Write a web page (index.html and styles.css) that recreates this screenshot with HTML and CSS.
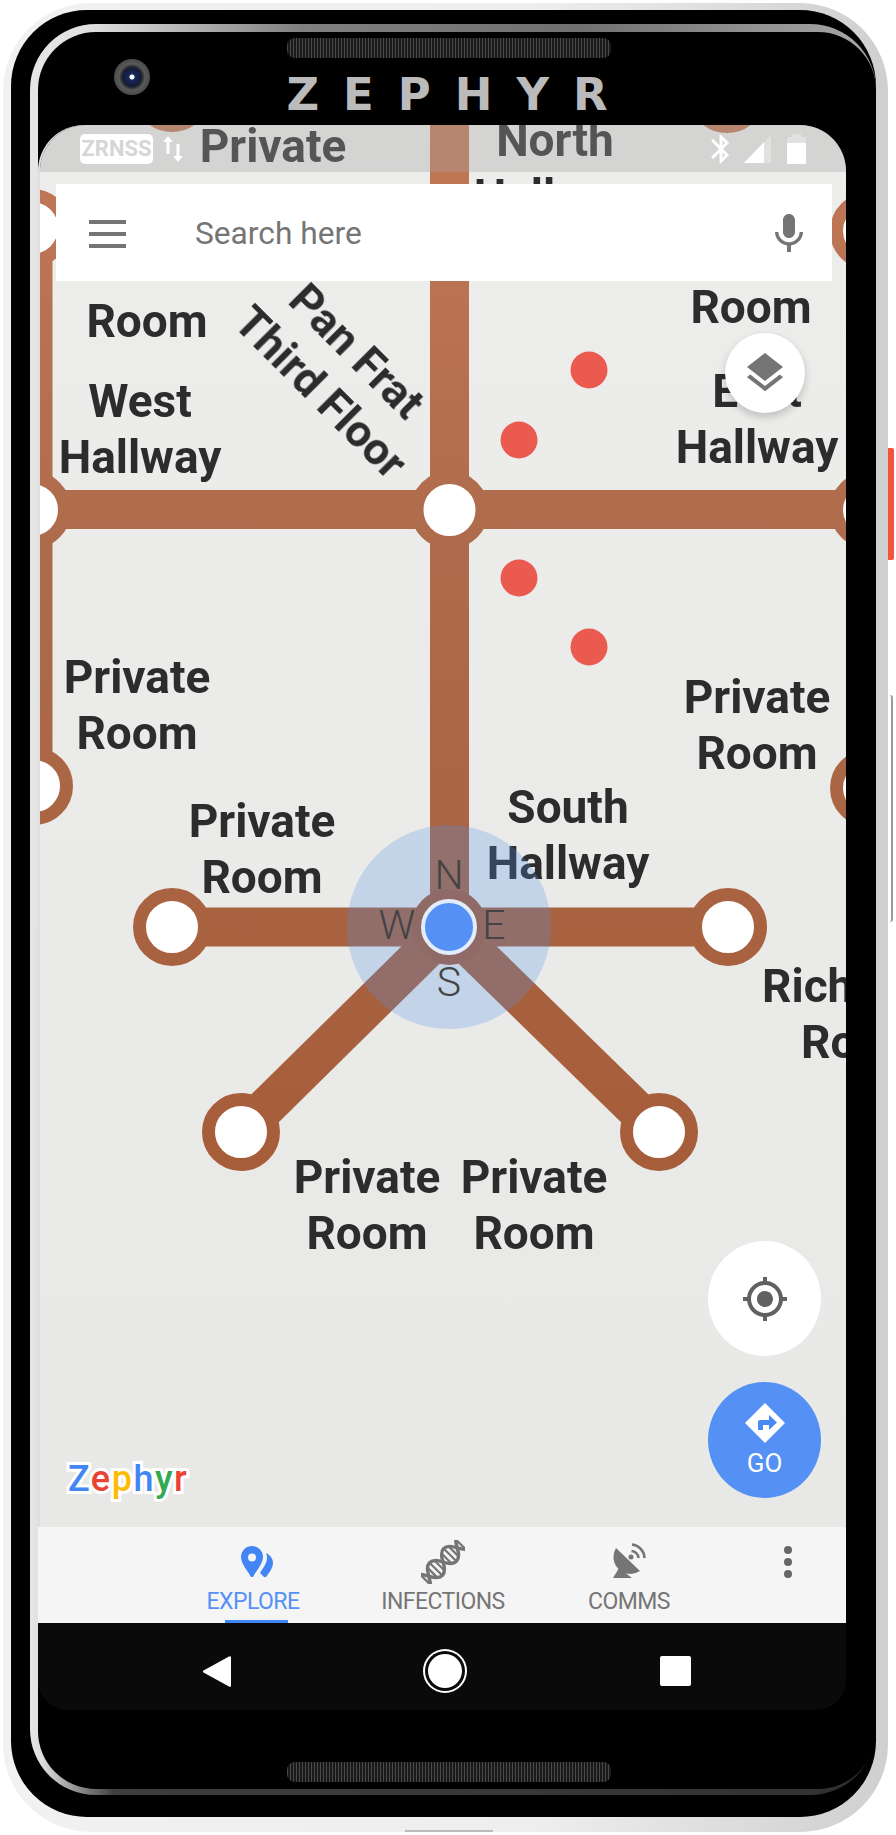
FILE: index.html
```html
<!DOCTYPE html>
<html lang="en">
<head>
<meta charset="utf-8">
<title>Zephyr</title>
<link rel="stylesheet" href="styles.css">
</head>
<body>
<div class="phone">
  <span class="side-btn side-red"></span>
  <span class="side-btn side-vol"></span>
  <div class="body">
    <div class="bezel">
      <div class="bezel-in">
        <header class="head">
          <span class="camera"></span>
          <div class="speaker"></div>
          <div class="brand">ZEPHYR</div>
        </header>
        <div class="screen">
          <main class="map">
            <svg class="tracks" viewBox="40 125 806 1402" width="806" height="1402" aria-hidden="true">
              <defs>
                <linearGradient id="t" gradientUnits="userSpaceOnUse" x1="0" y1="180" x2="0" y2="1150">
                  <stop offset="0" stop-color="#bf7655"/>
                  <stop offset="0.4" stop-color="#ad6b4b"/>
                  <stop offset="1" stop-color="#a65d3a"/>
                </linearGradient>
              </defs>
              <g stroke="url(#t)" stroke-width="39" fill="none">
                <path d="M449.500 100V927"/>
                <path d="M33 509.500H869"/>
                <path d="M33 228V786"/>
                <path d="M172 927H728"/>
                <path d="M449 927L241 1132"/>
                <path d="M449 927L659 1132"/>
              </g>
              <circle cx="449" cy="927" r="38" fill="#a65d3a"/>
              <g fill="#fff" stroke="url(#t)" stroke-width="13">
                <circle cx="172" cy="93" r="32.500"/>
                <circle cx="727" cy="94" r="32.500"/>
                <circle cx="32" cy="228" r="32.500"/>
                <circle cx="869" cy="231" r="32.500"/>
                <circle cx="32" cy="510" r="32.500"/>
                <circle cx="449.500" cy="510" r="32.500"/>
                <circle cx="869" cy="510" r="32.500"/>
                <circle cx="34" cy="786" r="32.500"/>
                <circle cx="869" cy="788" r="32.500"/>
                <circle cx="172" cy="927" r="32.500"/>
                <circle cx="728" cy="927" r="32.500"/>
                <circle cx="241" cy="1132" r="32.500"/>
                <circle cx="659" cy="1132" r="32.500"/>
              </g>
              <g fill="#ea5a4f">
                <circle cx="589" cy="370" r="18.500"/>
                <circle cx="519" cy="440" r="18.500"/>
                <circle cx="519" cy="578" r="18.500"/>
                <circle cx="589" cy="647" r="18.500"/>
              </g>
            </svg>

            <div class="lbl l-a">Private<br>Room</div>
            <div class="lbl l-b">North<br>Hallway</div>
            <div class="lbl l-c">Private<br>Room</div>
            <div class="lbl l-d">West<br>Hallway</div>
            <div class="lbl l-e">Room</div>
            <div class="lbl l-f">East<br>Hallway</div>
            <div class="lbl l-g">Private<br>Room</div>
            <div class="lbl l-h">Private<br>Room</div>
            <div class="lbl l-i">Private<br>Room</div>
            <div class="lbl l-j">South<br>Hallway</div>
            <div class="lbl-edge l-k">Richards</div>
            <div class="lbl-edge l-k2">Room</div>
            <div class="lbl l-l">Private<br>Room</div>
            <div class="lbl l-m">Private<br>Room</div>
            <div class="lbl-rot l-pan">Pan Frat</div>
            <div class="lbl-rot l-third">Third Floor</div>

            <div class="halo"></div>
            <span class="cp cp-n">N</span>
            <span class="cp cp-w">W</span>
            <span class="cp cp-e">E</span>
            <span class="cp cp-s">S</span>
            <div class="me"></div>

            <div class="status">
              <span class="badge">ZRNSS</span>
              <svg class="st-arrows" viewBox="0 0 20 26" width="20" height="26" aria-hidden="true">
                <path d="M5 0L0 6h3.500v12h3V6H10zM15 26l5-6h-3.500V8h-3v12H10z" fill="#fff"/>
              </svg>
              <svg class="st-bt" viewBox="0 0 24 24" width="34" height="34" aria-hidden="true">
                <path d="M17.710 7.710L12 2h-1v7.590L6.410 5 5 6.410 10.590 12 5 17.590 6.410 19 11 14.410V22h1l5.710-5.710-4.300-4.290 4.300-4.290zM13 5.830l1.880 1.880L13 9.590V5.830zm1.880 10.460L13 18.170v-3.760l1.880 1.880z" fill="#fff"/>
              </svg>
              <svg class="st-sig" viewBox="0 0 27 28" width="27" height="28" aria-hidden="true">
                <path d="M27 0V28H0z" fill="#fff" fill-opacity=".3"/>
                <path d="M20 7V28H0z" fill="#fff"/>
              </svg>
              <svg class="st-bat" viewBox="0 0 19 30" width="19" height="30" aria-hidden="true">
                <path d="M5 0h9v3h5v27H0V3h5z" fill="#fff" fill-opacity=".3"/>
                <path d="M0 9h19v21H0z" fill="#fff"/>
              </svg>
            </div>

            <div class="search">
              <div class="burger"><i></i><i></i><i></i></div>
              <span class="search-text">Search here</span>
              <svg class="mic" viewBox="0 0 24 24" width="48" height="48" aria-hidden="true">
                <path d="M12 14c1.660 0 2.990-1.340 2.990-3L15 5c0-1.660-1.340-3-3-3S9 3.340 9 5v6c0 1.660 1.340 3 3 3zm5.300-3c0 3-2.540 5.100-5.300 5.100S6.700 14 6.700 11H5c0 3.410 2.720 6.230 6 6.720V21h2v-3.280c3.280-.48 6-3.300 6-6.720h-1.700z" fill="#757575"/>
              </svg>
            </div>

            <div class="fab fab-layers">
              <svg viewBox="0 0 24 24" width="48" height="48" aria-hidden="true">
                <path d="M11.990 18.540l-7.370-5.730L3 14.070l9 7 9-7-1.630-1.270-7.380 5.740zM12 16l7.360-5.730L21 9l-9-7-9 7 1.630 1.270L12 16z" fill="#757575"/>
              </svg>
            </div>
            <div class="fab fab-loc">
              <svg viewBox="0 0 24 24" width="48" height="48" aria-hidden="true">
                <path d="M12 8c-2.210 0-4 1.790-4 4s1.790 4 4 4 4-1.790 4-4-1.790-4-4-4zm8.940 3c-.46-4.170-3.770-7.480-7.940-7.940V1h-2v2.060C6.830 3.520 3.520 6.830 3.060 11H1v2h2.060c.46 4.170 3.770 7.480 7.940 7.940V23h2v-2.060c4.170-.46 7.480-3.770 7.940-7.940H23v-2h-2.060zM12 19c-3.870 0-7-3.130-7-7s3.130-7 7-7 7 3.130 7 7-3.130 7-7 7z" fill="#616161"/>
              </svg>
            </div>
            <div class="fab fab-go">
              <svg viewBox="0 0 40 40" width="40" height="40" aria-hidden="true">
                <path d="M20 0L40 20 20 40 0 20z" fill="#fff"/>
                <path d="M13 27v-8a2 2 0 0 1 2-2h9v-5l8 7.500-8 7.500v-5h-6v5z" fill="#4a8af4"/>
              </svg>
              <span class="go-text">GO</span>
            </div>

            <div class="logo"><span class="c-b">Z</span><span class="c-r">e</span><span class="c-y">p</span><span class="c-b">h</span><span class="c-g">y</span><span class="c-r">r</span></div>
          </main>

          <nav class="tabs">
            <div class="tab tab-explore">
              <div class="ic">
                <svg class="ic-pin" viewBox="0 0 32 32" width="32" height="32" aria-hidden="true">
                  <path fill-rule="evenodd" d="M11 0a11 11 0 0 1 11 11c0 7-7 14-10 20h-2C7 25 0 18 0 11A11 11 0 0 1 11 0zm0 7.500a4 4 0 1 0 0 8 4 4 0 0 0 0-8z" fill="#4285f4"/>
                  <path d="M25 7c4 2 7 5.500 7 10 0 5-4 10-7 14h-2l-4-4c3-5 7-10 7-15 0-2-.4-3.500-1-5z" fill="#4285f4"/>
                </svg>
              </div>
              <span class="tab-label">EXPLORE</span>
              <span class="tab-line"></span>
            </div>
            <div class="tab">
              <div class="ic">
                <svg viewBox="0 0 44 44" width="44" height="44" aria-hidden="true">
                  <g transform="rotate(-45 22 22) translate(22 22)" fill="none" stroke="#757575" stroke-linecap="round">
                    <path d="M-29 10C-26 10-24 6-20 0C-14-12-6-12 0 0S14 12 20 0C24-6 26-10 29-10" stroke-width="3.400"/>
                    <path d="M-29-10C-26-10-24-6-20 0C-14 12-6 12 0 0S14-12 20 0C24 6 26 10 29 10" stroke-width="3.400"/>
                    <path d="M-25-5v10M-15-6v12M-10-8v16M-5-6v12M5-6v12M10-8v16M15-6v12M25-5v10" stroke-width="2.200"/>
                  </g>
                </svg>
              </div>
              <span class="tab-label">INFECTIONS</span>
            </div>
            <div class="tab tab-comms">
              <div class="ic">
                <svg class="ic-dish" viewBox="0 0 33 35" width="33" height="35" aria-hidden="true">
                  <path d="M3 5L27 28A17 17 0 0 1 3 5z" fill="#757575"/>
                  <path d="M0 35L6 25l13 10z" fill="#757575"/>
                  <path d="M19 1.500A14 14 0 0 1 31.500 15M18.500 8A7.500 7.500 0 0 1 25.500 15" fill="none" stroke="#757575" stroke-width="2.600"/>
                  <circle cx="18" cy="14" r="2.500" fill="#757575"/>
                </svg>
              </div>
              <span class="tab-label">COMMS</span>
            </div>
            <div class="dots"><i></i><i></i><i></i></div>
          </nav>

          <div class="softkeys">
            <svg viewBox="0 0 28 33" width="28" height="33" aria-hidden="true"><path d="M26 1.500a1.200 1.200 0 0 1 2 .8V30.700a1.200 1.200 0 0 1-2 .8L.5 17.500a1.200 1.200 0 0 1 0-2z" fill="#fff"/></svg>
            <span class="key-home"></span>
            <span class="key-recent"></span>
          </div>
        </div>
        <div class="chin"><div class="speaker"></div></div>
      </div>
    </div>
  </div>
</div>
</body>
</html>
```

FILE: styles.css
```css
* { box-sizing: border-box; }
html, body { margin: 0; padding: 0; background: #fff; }
body { width: 896px; height: 1835px; overflow: hidden; font-family: Roboto, "Liberation Sans", sans-serif; }

.phone {
  position: relative;
  margin: 3px 0 0 3px;
  width: 885px;
  height: 1829px;
  padding: 7px 12px 15px 8px;
  border-radius: 88px;
  background: linear-gradient(90deg, #f1f1f1 0, #eeeeee 60%, #cfcfcf 100%);
}
.phone::after {
  content: "";
  position: absolute;
  left: 402px;
  bottom: 0;
  width: 88px;
  height: 2px;
  background: #bbb;
}
.side-btn { position: absolute; left: 885px; }
.side-red { top: 445px; width: 6px; height: 112px; background: #f2553c; border-radius: 0 2px 2px 0; }
.side-vol { top: 692px; width: 5px; height: 227px; background: #fff; border-right: 2px solid #9b9b9b; border-radius: 0 3px 3px 0; }

.body {
  height: 100%;
  background: #000;
  border-radius: 76px;
  padding: 14px 0 22px 19px;
}
.bezel {
  height: 100%;
  border-radius: 66px;
  padding: 8px 0 6px 8px;
  background:
    linear-gradient(90deg, #e6e6e6 0, #dfdfdf 60px, #808080 32%, #707070 65%, #a8a8a8 100%) top / 100% 51% no-repeat,
    linear-gradient(90deg, #e6e6e6 0, #dedede 12px, #3e3e3e 10%, #333 92%, #2a2a2a 100%) bottom / 100% 51% no-repeat;
}
.bezel-in {
  height: 100%;
  background: #000;
  border-radius: 58px;
  padding-right: 30px;
  display: flex;
  flex-direction: column;
}

.head {
  position: relative;
  height: 93px;
  flex: none;
  padding: 6px 0 0 14px;
  display: flex;
  flex-direction: column;
  align-items: center;
}
.camera {
  position: absolute;
  left: 76px;
  top: 27px;
  width: 36px;
  height: 36px;
  border-radius: 50%;
  background: radial-gradient(circle at 50% 50%, #fff 0 2px, #1b2a5c 3px, #131a38 9px, #333 11px, #5a5a5a 13px, #4a4a4a 18px);
}
.speaker {
  width: 324px;
  height: 20px;
  flex: none;
  border-radius: 8px;
  background: repeating-linear-gradient(90deg, #484848 0 1.500px, #1a1a1a 1.500px 3px);
}
.brand {
  margin-top: 17px;
  padding-left: 24px;
  margin-right: 4px;
  font-family: "DejaVu Sans", sans-serif;
  font-size: 45px;
  line-height: 39px;
  font-weight: 700;
  letter-spacing: 24px;
  color: #bbbbbb;
  white-space: nowrap;
}

.screen { flex: none; display: flex; flex-direction: column; }
.map {
  position: relative;
  margin-left: 2px;
  height: 1402px;
  overflow: hidden;
  border-radius: 46px 46px 0 0;
  box-shadow: -2px 0 0 #dfdfdf;
  background: linear-gradient(#ededec, #e8e8e7);
}
.tracks { position: absolute; left: 0; top: 0; filter: blur(.6px); }

.lbl, .lbl-edge {
  position: absolute;
  white-space: nowrap;
  font-size: 46px;
  line-height: 56px;
  font-weight: 700;
  color: #2c2c2c;
  filter: blur(.7px);
}
.lbl { transform: translateX(-50%); text-align: center; }
.l-a { left: 233px; top: -7px; }
.l-b { left: 515px; top: -13px; }
.l-c { left: 107px; top: 112px; }
.l-d { left: 100px; top: 248px; }
.l-e { left: 711px; top: 154px; }
.l-f { left: 717px; top: 238px; }
.l-g { left: 97px; top: 524px; }
.l-h { left: 717px; top: 544px; }
.l-i { left: 222px; top: 668px; }
.l-j { left: 528px; top: 654px; }
.l-k { left: 722px; top: 833px; }
.l-k2 { left: 761px; top: 889px; }
.l-l { left: 327px; top: 1024px; }
.l-m { left: 494px; top: 1024px; }

.lbl-rot {
  position: absolute;
  white-space: nowrap;
  font-size: 45px;
  line-height: 1;
  font-weight: 700;
  color: #2c2c2c;
  transform: translate(-50%, -50%) rotate(45deg);
  filter: blur(.7px);
}
.l-pan { left: 317px; top: 226px; }
.l-third { left: 281px; top: 267px; }

.halo {
  position: absolute;
  left: 307px;
  top: 700px;
  width: 204px;
  height: 204px;
  border-radius: 50%;
  background: rgba(80, 148, 236, .25);
}
.me {
  position: absolute;
  left: 381px;
  top: 774px;
  width: 56px;
  height: 56px;
  border-radius: 50%;
  background: #5591f5;
  border: 4px solid #e2ecfb;
}
.cp {
  position: absolute;
  transform: translate(-50%, -50%);
  font-size: 41px;
  line-height: 1;
  font-weight: 300;
  color: #444;
}
.cp-n { left: 409px; top: 750px; }
.cp-w { left: 357px; top: 800px; }
.cp-e { left: 454px; top: 800px; }
.cp-s { left: 409px; top: 857px; }

.status {
  position: absolute;
  left: 0;
  top: 0;
  width: 100%;
  height: 47px;
  padding: 0 40px;
  display: flex;
  align-items: center;
  background: rgba(166, 166, 166, .345);
}
.badge {
  width: 73px;
  height: 30px;
  border-radius: 5px;
  background: #fff;
  color: #d6d6d6;
  font-size: 22px;
  line-height: 30px;
  font-weight: 700;
  text-align: center;
}
.st-arrows { margin-left: 10px; }
.st-bt { margin-left: auto; }
.st-sig { margin-left: 6px; }
.st-bat { margin-left: 16px; }

.search {
  position: absolute;
  left: 16px;
  top: 59px;
  width: 776px;
  height: 97px;
  padding: 2px 19px 0 33px;
  display: flex;
  align-items: center;
  background: #fff;
}
.burger { width: 37px; display: flex; flex-direction: column; gap: 8px; }
.burger i { display: block; height: 4px; background: #757575; }
.search-text { margin-left: 69px; font-size: 31.700px; color: #757575; }
.mic { margin-left: auto; }

.fab {
  position: absolute;
  border-radius: 50%;
  background: #fff;
  display: flex;
  flex-direction: column;
  align-items: center;
  justify-content: center;
}
.fab-layers { left: 685px; top: 208px; width: 80px; height: 80px; box-shadow: 0 4px 8px rgba(0, 0, 0, .2); }
.fab-loc { left: 668px; top: 1116px; width: 113px; height: 115px; }
.fab-go { left: 668px; top: 1257px; width: 113px; height: 116px; background: #5591f5; padding-top: 21px; justify-content: flex-start; }
.go-text { margin-top: 7px; font-size: 26px; line-height: 26px; color: #fff; }

.logo {
  position: absolute;
  left: 28px;
  top: 1333px;
  font-size: 36px;
  line-height: 42px;
  font-weight: 500;
  letter-spacing: 1.500px;
  -webkit-text-stroke: 6px #fff;
  paint-order: stroke fill;
}
.c-b { color: #4285f4; }
.c-r { color: #ea4335; }
.c-y { color: #fbbc05; }
.c-g { color: #34a853; }

.tabs {
  height: 96px;
  flex: none;
  padding-left: 120px;
  display: flex;
  background: #f5f5f5;
}
.tab {
  position: relative;
  width: 190px;
  padding-top: 13px;
  display: flex;
  flex-direction: column;
  align-items: center;
  color: #757575;
}
.tab-comms { width: 182px; }
.tab-explore { color: #5591f5; }
.ic { height: 48px; display: flex; align-items: flex-start; }
.ic-pin { margin: 6px 0 0 8px; }
.ic-dish { margin-top: 3px; }
.tab-label { font-size: 23px; letter-spacing: -.55px; line-height: 28px; }
.tab-line { position: absolute; left: 67px; bottom: 0; width: 63px; height: 3px; background: #4285f4; }
.dots { margin: 19px 0 0 auto; padding-right: 54px; display: flex; flex-direction: column; gap: 4px; }
.dots i { display: block; width: 8px; height: 8px; border-radius: 50%; background: #666; }

.softkeys {
  height: 87px;
  flex: none;
  padding: 9px 0 0 165px;
  display: flex;
  align-items: center;
  background: #0a0a0a;
  border-radius: 0 0 30px 30px;
}
.key-home {
  margin-left: 197px;
  width: 34px;
  height: 34px;
  border-radius: 50%;
  background: #fff;
  box-shadow: 0 0 0 3px #0a0a0a, 0 0 0 5px #fff;
}
.key-recent { margin-left: 198px; width: 31px; height: 30px; border-radius: 2px; background: #fff; }

.chin { flex: 1; padding: 52px 0 0 14px; display: flex; justify-content: center; }
```
